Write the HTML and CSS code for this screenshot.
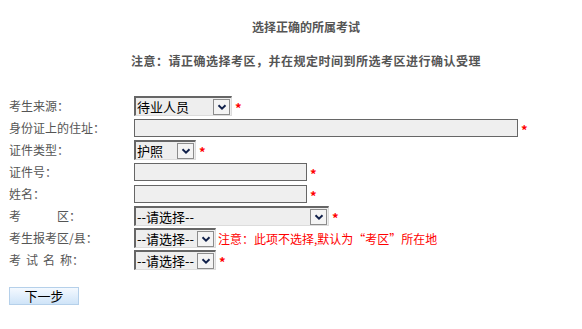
FILE: index.html
```html
<!DOCTYPE html>
<html lang="zh-CN">
<head>
<meta charset="utf-8">
<title>选择正确的所属考试</title>
<link rel="stylesheet" href="styles.css">
</head>
<body>
<div class="head">
  <div class="title">选择正确的所属考试</div>
  <div class="notice">注意：请正确选择考区，并在规定时间到所选考区进行确认受理</div>
</div>
<form class="form">
  <div class="row">
    <label class="lbl">考生来源：</label>
    <span class="sel w98"><select><option>待业人员</option></select><span class="arr"><svg viewBox="0 0 16 16" width="16" height="16"><path d="M4 6 L8 10 L12 6" fill="none" stroke="#10204a" stroke-width="2.2"/></svg></span></span><span class="req">*</span>
  </div>
  <div class="row">
    <label class="lbl">身份证上的住址：</label>
    <input class="txt w383" type="text"><span class="req">*</span>
  </div>
  <div class="row">
    <label class="lbl">证件类型：</label>
    <span class="sel w61"><select><option>护照</option></select><span class="arr"><svg viewBox="0 0 16 16" width="16" height="16"><path d="M4 6 L8 10 L12 6" fill="none" stroke="#10204a" stroke-width="2.2"/></svg></span></span><span class="req">*</span>
  </div>
  <div class="row">
    <label class="lbl">证件号：</label>
    <input class="txt w172" type="text"><span class="req">*</span>
  </div>
  <div class="row">
    <label class="lbl">姓名：</label>
    <input class="txt w172" type="text"><span class="req">*</span>
  </div>
  <div class="row">
    <label class="lbl">考&emsp;&emsp;&emsp;区：</label>
    <span class="sel w194"><select><option>--请选择--</option></select><span class="arr"><svg viewBox="0 0 16 16" width="16" height="16"><path d="M4 6 L8 10 L12 6" fill="none" stroke="#10204a" stroke-width="2.2"/></svg></span></span><span class="req">*</span>
  </div>
  <div class="row">
    <label class="lbl">考生报考区/县：</label>
    <span class="sel w81"><select><option>--请选择--</option></select><span class="arr"><svg viewBox="0 0 16 16" width="16" height="16"><path d="M4 6 L8 10 L12 6" fill="none" stroke="#10204a" stroke-width="2.2"/></svg></span></span><span class="hint">注意：此项不选择,默认为“考区”所在地</span>
  </div>
  <div class="row">
    <label class="lbl"><span class="sp">考试名</span>称：</label>
    <span class="sel w81"><select><option>--请选择--</option></select><span class="arr"><svg viewBox="0 0 16 16" width="16" height="16"><path d="M4 6 L8 10 L12 6" fill="none" stroke="#10204a" stroke-width="2.2"/></svg></span></span><span class="req">*</span>
  </div>
  <div class="actions">
    <button type="button" class="btn">下一步</button>
  </div>
</form>
</body>
</html>
```
FILE: styles.css
```css
html, body {
  margin: 0;
  padding: 0;
  background: #fff;
}
body {
  font-family: "Noto Sans CJK SC", "Liberation Sans", sans-serif;
  font-size: 12px;
  color: #555;
}
.head {
  padding-left: 30px;
  text-align: center;
}
.title {
  margin-top: 19px;
  line-height: 16px;
  font-weight: bold;
  color: #555;
}
.notice {
  margin-top: 18px;
  line-height: 16px;
  font-weight: bold;
  letter-spacing: 0.5px;
  color: #555;
}
.form {
  margin: 26px 0 0 0;
  padding-left: 9px;
}
.row {
  display: flex;
  align-items: center;
  height: 22px;
}
.lbl {
  width: 125px;
  flex: none;
  color: #555;
  line-height: 16px;
}
.sp {
  letter-spacing: 5px;
}
.txt {
  box-sizing: border-box;
  height: 18px;
  margin: 0;
  padding: 0 2px;
  border: 1px solid #666;
  background: #efefef;
  font: inherit;
}
.w383 { width: 384px; }
.w172 { width: 173px; }
.sel {
  box-sizing: border-box;
  display: inline-flex;
  align-items: center;
  height: 20px;
  border-top: 2px solid #666;
  border-left: 2px solid #666;
  border-right: 1px solid #dcdcdc;
  border-bottom: 1px solid #dcdcdc;
  background: #eee;
}
.w98 { width: 98px; }
.w61 { width: 62px; }
.w194 { width: 195px; }
.w81 { width: 82px; }
.sel select {
  flex: 1;
  min-width: 0;
  height: 17px;
  margin: 0;
  padding: 0 0 0 1px;
  border: 0;
  outline: 0;
  background: transparent;
  appearance: none;
  -webkit-appearance: none;
  font-family: "Noto Sans CJK SC", "Liberation Sans", sans-serif;
  font-size: 13px;
  line-height: 17px;
  color: #000;
}
.arr {
  box-sizing: border-box;
  flex: none;
  display: flex;
  align-items: center;
  justify-content: center;
  width: 17px;
  height: 16px;
  margin-right: 1px;
  border: 1px solid #8c8c8c;
  background: #f4f4f4;
}
.arr svg {
  width: 14px;
  height: 14px;
}
.req {
  margin-left: 3px;
  color: #f00;
  font-size: 13px;
  font-weight: bold;
  line-height: 12px;
  align-self: center;
  transform: translateY(2px);
}
.hint {
  margin-left: 2px;
  color: #f00;
  font-size: 12px;
}
.actions {
  margin-top: 16px;
}
.btn {
  box-sizing: border-box;
  width: 70px;
  height: 18px;
  margin: 0;
  padding: 0;
  border: 1px solid #b5d0ea;
  background: linear-gradient(#f4f9ff, #cfe4f8);
  font-family: "Noto Sans CJK SC", "Liberation Sans", sans-serif;
  font-size: 13px;
  line-height: 16px;
  color: #000;
}
```
